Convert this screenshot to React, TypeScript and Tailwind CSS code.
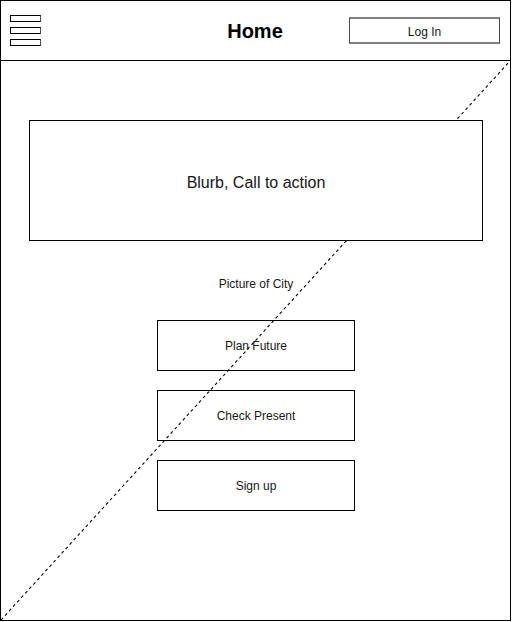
const choice =
  "h-[51px] w-full border border-black text-xs leading-4 text-neutral-900";

function MenuIcon() {
  return (
    <span className="flex w-[31px] flex-col gap-[5px]">
      <span className="h-[7px] border border-black border-r-neutral-600" />
      <span className="h-[7px] border border-black border-r-neutral-600" />
      <span className="h-[7px] border border-black border-r-neutral-600" />
    </span>
  );
}

function Header() {
  return (
    <header className="grid h-[60px] grid-cols-3 items-center border-b border-black pr-[10px] pl-[9px]">
      <button type="button" aria-label="Menu" className="w-fit">
        <MenuIcon />
      </button>
      <h1 className="text-center text-xl leading-6 font-bold">Home</h1>
      <button
        type="button"
        className="h-[27px] w-[151px] justify-self-end border-x border-y-2 border-x-[#484848] border-y-[#808080] pt-[3px] text-xs leading-4 text-neutral-900"
      >
        Log In
      </button>
    </header>
  );
}

export default function App() {
  return (
    <div className="flex min-h-screen bg-white pr-px pb-px font-['Liberation_Sans',Arial,sans-serif] text-black">
      <div className="flex flex-1 flex-col border border-black">
        <Header />
        <main className="relative flex flex-1 flex-col items-center pt-[59px] pr-[27px] pb-10 pl-7">
          <section className="relative z-10 flex h-[121px] w-full items-center justify-center border border-black bg-white pt-1">
            <p className="text-base leading-5 text-neutral-900">Blurb, Call to action</p>
          </section>
          <p className="mt-[35px] text-xs leading-4 text-neutral-900">Picture of City</p>
          <nav className="mt-7 flex w-[198px] flex-col gap-[19px]">
            <button type="button" className={choice}>Plan Future</button>
            <button type="button" className={choice}>Check Present</button>
            <button type="button" className={choice}>Sign up</button>
          </nav>
          <svg
            className="pointer-events-none absolute inset-0 h-full w-full"
            aria-hidden="true"
          >
            <line
              x1="0"
              y1="100%"
              x2="100%"
              y2="0"
              stroke="black"
              strokeWidth="1.1"
              strokeDasharray="3 3"
            />
          </svg>
        </main>
      </div>
    </div>
  );
}
